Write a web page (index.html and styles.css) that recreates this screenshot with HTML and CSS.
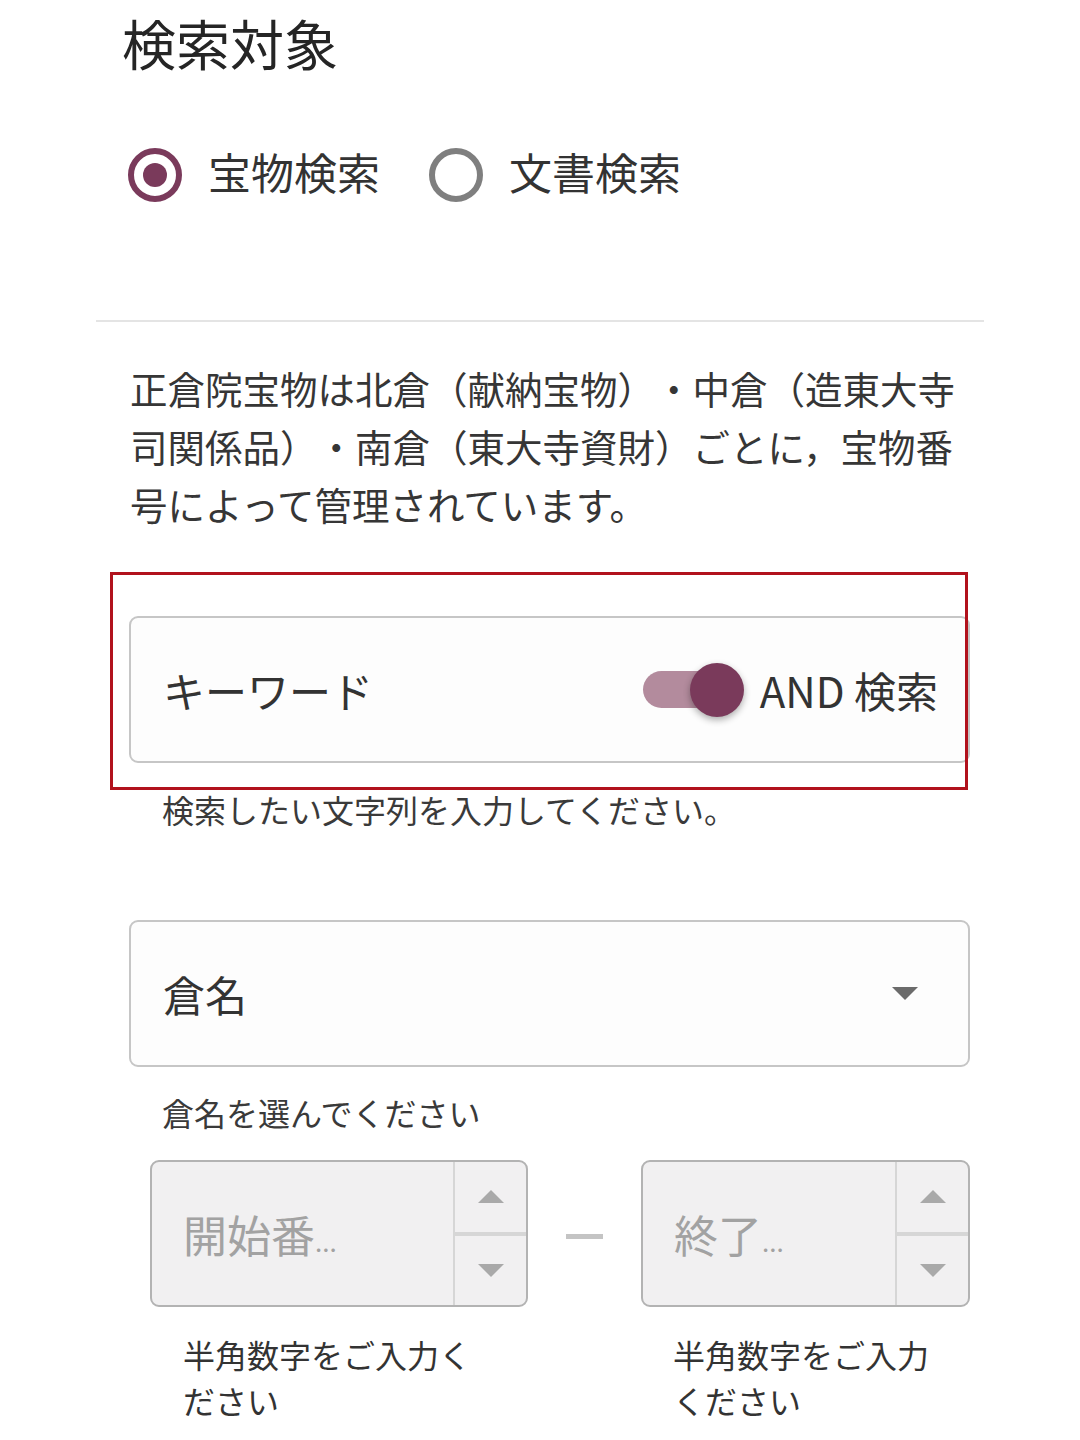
FILE: index.html
```html
<!DOCTYPE html>
<html lang="ja">
<head>
<meta charset="utf-8">
<title>検索対象</title>
<link rel="stylesheet" href="styles.css">
</head>
<body>
<main class="page">
  <h1 class="title">検索対象</h1>

  <div class="radios">
    <label class="radio">
      <span class="radio-circle checked"><span class="radio-dot"></span></span>
      <span class="radio-label">宝物検索</span>
    </label>
    <label class="radio">
      <span class="radio-circle"></span>
      <span class="radio-label">文書検索</span>
    </label>
  </div>

  <div class="divider"></div>

  <p class="intro">正倉院宝物は北倉（献納宝物）・中倉（造東大寺司関係品）・南倉（東大寺資財）ごとに，宝物番号によって管理されています。</p>

  <section class="form">
    <div class="keyword-wrap">
      <div class="field keyword">
        <span class="field-label">キーワード</span>
        <span class="toggle"><span class="toggle-track"></span><span class="toggle-thumb"></span></span>
        <span class="and-label">AND 検索</span>
      </div>
      <div class="highlight"></div>
    </div>
    <div class="hint">検索したい文字列を入力してください。</div>

    <div class="field select">
      <span class="field-label">倉名</span>
      <span class="caret"></span>
    </div>
    <div class="hint hint-select">倉名を選んでください</div>

    <div class="range">
      <div class="range-col col-start">
        <div class="num-input">
          <span class="placeholder">開始番<span class="ell">...</span></span>
          <span class="spinner">
            <span class="spin spin-up"><span class="tri-up"></span></span>
            <span class="spin spin-down"><span class="tri-down"></span></span>
          </span>
        </div>
        <div class="num-hint">半角数字をご入力ください</div>
      </div>
      <div class="dash"></div>
      <div class="range-col col-end">
        <div class="num-input">
          <span class="placeholder">終了<span class="ell">...</span></span>
          <span class="spinner">
            <span class="spin spin-up"><span class="tri-up"></span></span>
            <span class="spin spin-down"><span class="tri-down"></span></span>
          </span>
        </div>
        <div class="num-hint">半角数字をご入力ください</div>
      </div>
    </div>
  </section>
</main>
</body>
</html>
```

FILE: styles.css
```css
* { box-sizing: border-box; }

html, body {
  margin: 0;
  padding: 0;
  background: #ffffff;
}

body {
  font-family: "Noto Sans CJK JP", "Noto Sans", sans-serif;
  color: #333333;
  width: 1080px;
  height: 1440px;
  overflow: hidden;
  text-spacing-trim: space-all;
}

.page {
  display: flex;
  flex-direction: column;
}

.title {
  margin: 13px 0 0 122px;
  font-size: 54px;
  line-height: 60px;
  font-weight: 400;
  color: #252525;
}

.radios {
  display: flex;
  align-items: center;
  margin: 71px 0 0 128px;
  gap: 49px;
}

.radio {
  display: flex;
  align-items: center;
  gap: 26px;
}

.radio-circle {
  width: 54px;
  height: 54px;
  border-radius: 50%;
  border: 6px solid #7f7f7f;
  display: flex;
  align-items: center;
  justify-content: center;
}

.radio-circle.checked {
  border-color: #7a3a5b;
}

.radio-dot {
  width: 24px;
  height: 24px;
  border-radius: 50%;
  background: #7a3a5b;
}

.radio-label {
  font-size: 43px;
  line-height: 54px;
  padding-bottom: 8px;
  color: #333333;
}

.divider {
  margin: 114px 96px 0 96px;
  height: 2px;
  background: #e4e4e4;
}

.intro {
  margin: 37px 0 0 130px;
  width: 840px;
  font-size: 37.5px;
  line-height: 58px;
  color: #363636;
}

.form {
  margin: 83px 0 0 129px;
  width: 841px;
  display: flex;
  flex-direction: column;
}

.keyword-wrap {
  position: relative;
}

.field {
  height: 147px;
  border: 2px solid #c6c6c6;
  border-radius: 9px;
  background: #fdfdfd;
  display: flex;
  align-items: center;
  padding: 0 30px 0 32px;
}

.field-label {
  font-size: 42px;
  line-height: 50px;
  color: #333333;
}

.toggle {
  margin-left: auto;
  margin-right: 16px;
  width: 101px;
  height: 54px;
  display: flex;
  align-items: center;
  position: relative;
}

.toggle-track {
  width: 79px;
  height: 37px;
  border-radius: 19px;
  background: #b38b9d;
}

.toggle-thumb {
  position: absolute;
  left: 47px;
  top: 0;
  width: 54px;
  height: 54px;
  border-radius: 50%;
  background: #7a3a5b;
  box-shadow: 0 3px 7px rgba(0, 0, 0, 0.32);
}

.and-label {
  font-size: 42px;
  line-height: 50px;
  color: #333333;
}

.highlight {
  position: absolute;
  left: -19px;
  top: -44px;
  width: 858px;
  height: 218px;
  border: 3px solid #b1121d;
  pointer-events: none;
}

.hint {
  margin-top: 26px;
  padding-left: 33px;
  font-size: 32px;
  line-height: 40px;
  color: #3a3a3a;
}

.select {
  margin-top: 91px;
  padding-right: 50px;
}

.caret {
  margin-left: auto;
  width: 0;
  height: 0;
  border-left: 13.5px solid transparent;
  border-right: 13.5px solid transparent;
  border-top: 13px solid #6b6b6b;
}

.hint-select {
  margin-top: 25px;
  font-size: 32px;
}

.range {
  margin-top: 28px;
  padding-left: 21px;
  display: flex;
  align-items: flex-start;
}

.range-col {
  display: flex;
  flex-direction: column;
}

.col-start { width: 378px; }
.col-end { width: 329px; }

.num-input {
  height: 147px;
  border: 2px solid #b3b3b3;
  border-radius: 9px;
  background: #f1f0f1;
  display: flex;
  overflow: hidden;
}

.placeholder {
  flex: 1;
  display: flex;
  align-items: center;
  padding-left: 31px;
  font-size: 44px;
  line-height: 50px;
  color: #a2a2a2;
  white-space: nowrap;
}

.ell {
  font-size: 26px;
  align-self: center;
  margin-top: 14px;
  letter-spacing: 0;
}

.spinner {
  width: 73px;
  border-left: 2px solid #d6d6d6;
  display: flex;
  flex-direction: column;
}

.spin {
  flex: 1;
  display: flex;
  align-items: center;
  justify-content: center;
}

.spin-up {
  border-bottom: 4px solid #d6d6d6;
}

.tri-up {
  width: 0;
  height: 0;
  border-left: 13px solid transparent;
  border-right: 13px solid transparent;
  border-bottom: 13px solid #a9a9a9;
}

.tri-down {
  width: 0;
  height: 0;
  border-left: 13px solid transparent;
  border-right: 13px solid transparent;
  border-top: 13px solid #a9a9a9;
}

.dash {
  width: 37px;
  height: 5px;
  margin: 74px 38px 0 38px;
  background: #c4c4c4;
}

.num-hint {
  margin-top: 24px;
  padding: 0 36px 0 33px;
  font-size: 32px;
  line-height: 46px;
  color: #333333;
}

.col-end .num-hint {
  padding-left: 32px;
}
```
